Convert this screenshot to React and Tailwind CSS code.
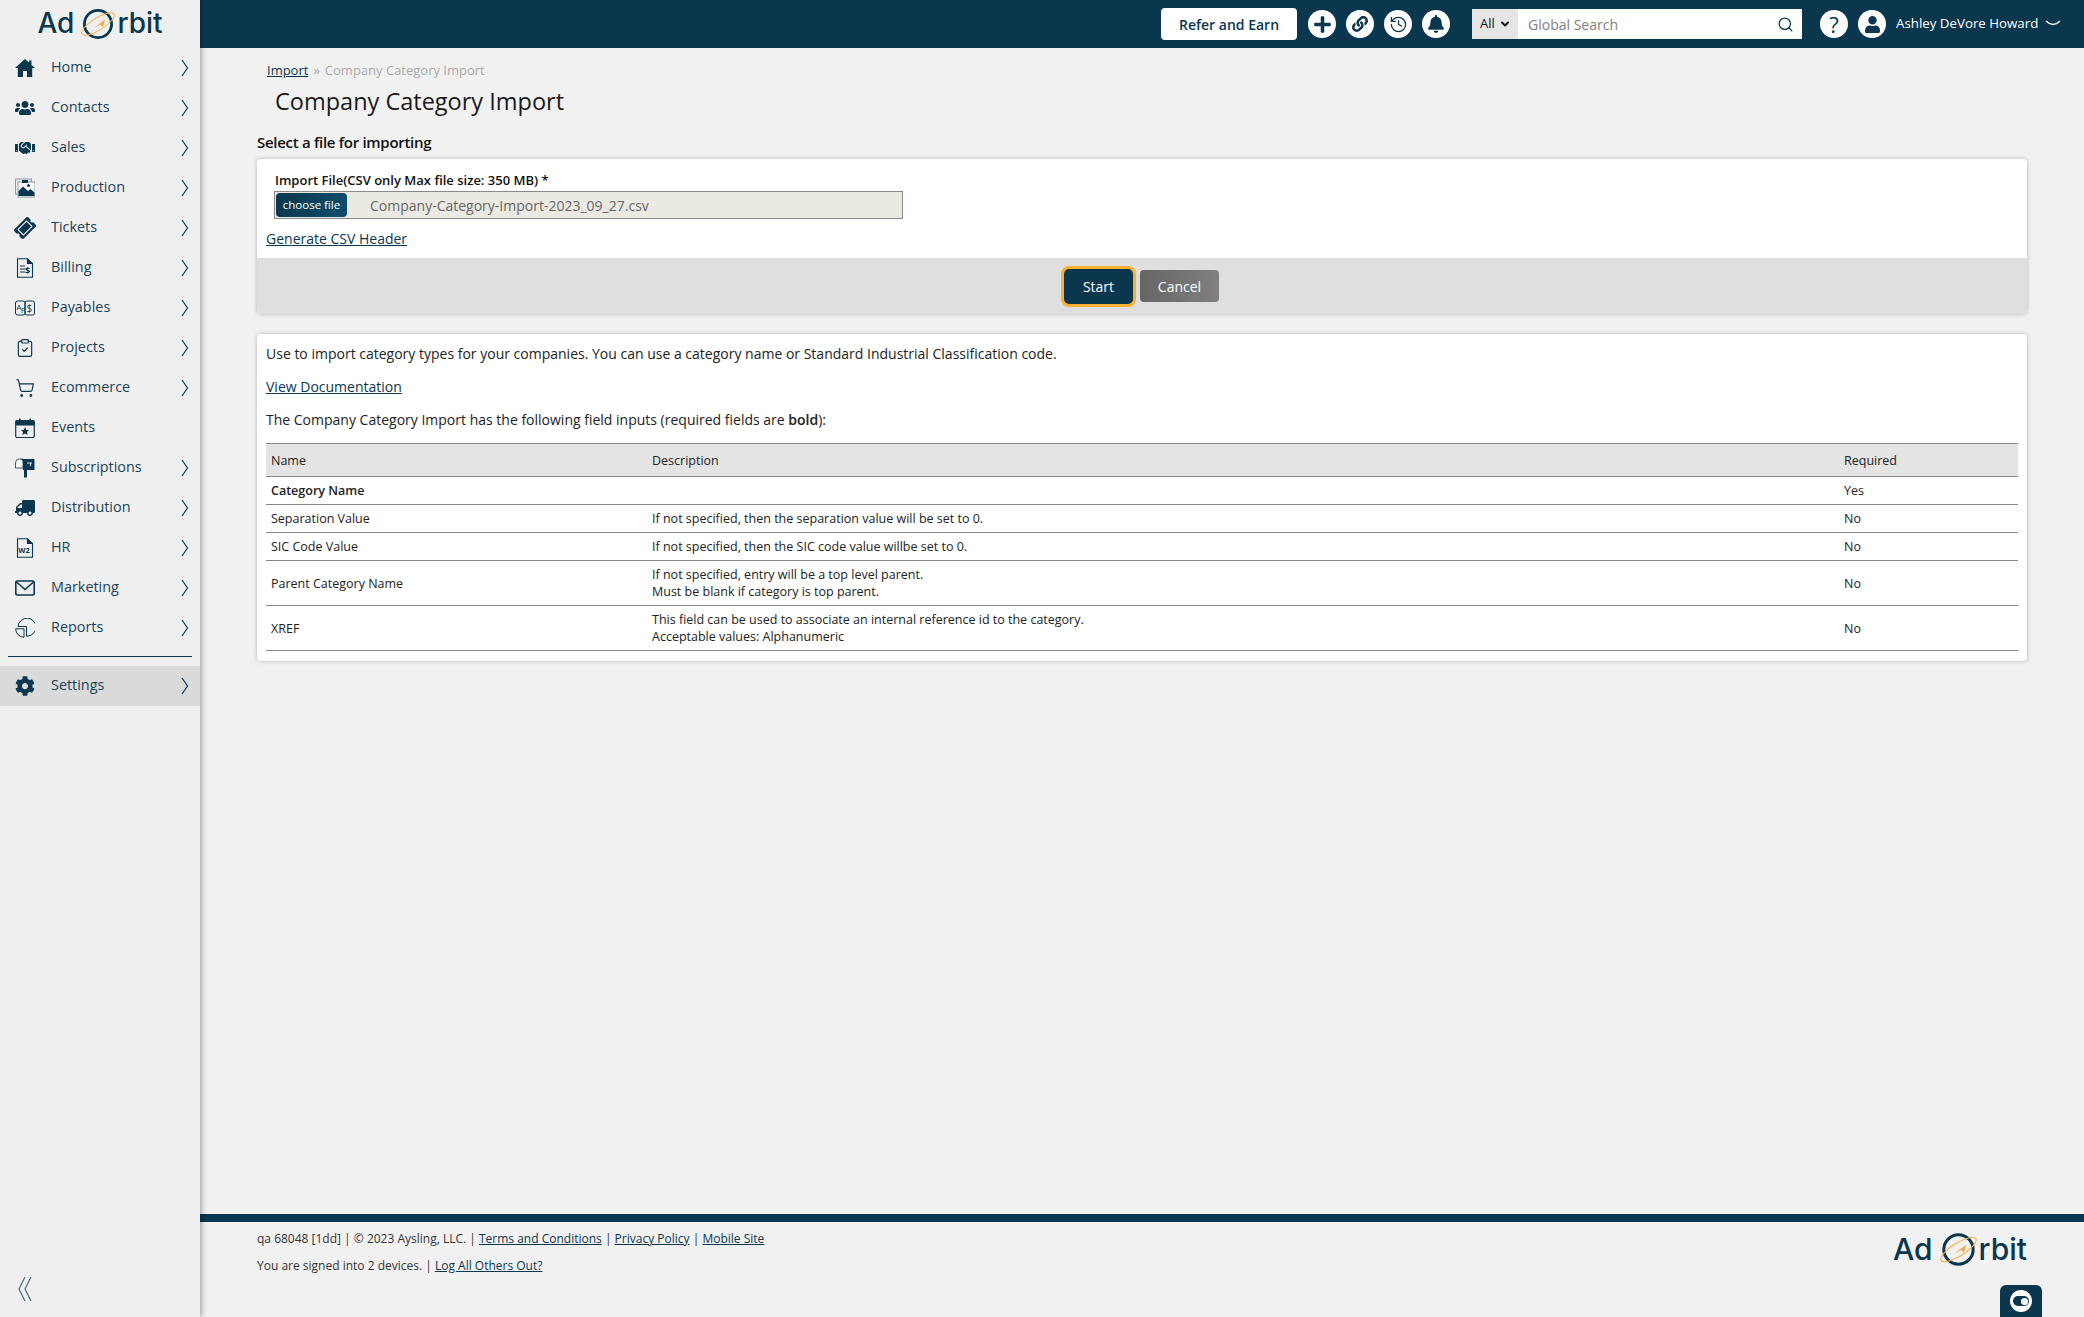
import { FaUsers, FaHandshake, FaTicketAlt, FaTruck, FaCog, FaBell, FaPlus, FaLink, FaUser } from 'react-icons/fa';
import { ShoppingCart, ClipboardCheck, Search, History, ChevronDown } from 'lucide-react';

const HomeIcon = () => (
  <svg viewBox="0 0 20 20" className="w-5 h-5" fill="#0a374d">
    <path d="M10 1 L14 4.6 V2.5 H16.5 V6.9 L20 10 H17.2 V19 H12 V13 H8 V19 H2.8 V10 H0 Z" />
  </svg>
);

const ProductionIcon = () => (
  <svg viewBox="0 0 20 20" className="w-5 h-5">
    <rect x="0.5" y="1" width="16" height="15" fill="none" stroke="#8a9aa5" strokeWidth="1" />
    <rect x="3" y="4" width="17" height="15" fill="#fff" stroke="#8a9aa5" strokeWidth="1" />
    <path d="M3.5 18 L3.5 13 L8 8.5 L13 13 L15.5 11 L19.5 14.5 L19.5 18 Z" fill="#0a374d" />
    <circle cx="13.5" cy="7.5" r="1.5" fill="#0a374d" />
    <rect x="7" y="2" width="6" height="3" fill="#0a374d" />
  </svg>
);

const BillingIcon = () => (
  <svg viewBox="0 0 20 20" className="w-5 h-5" fill="none" stroke="#0a374d" strokeWidth="1.1">
    <path d="M2.5 0.7 H12.5 L17.5 5.5 V19.3 H2.5 Z" />
    <path d="M12.5 0.7 V5.5 H17.5" fill="#0a374d" />
    <path d="M5 8 H10 M5 11 H10 M5 14 H10" />
    <text x="10" y="15.5" fontSize="9" fontWeight="700" fill="#0a374d" stroke="none" fontFamily="Open Sans">$</text>
  </svg>
);

const PayablesIcon = () => (
  <svg viewBox="0 0 20 20" className="w-5 h-5" fill="none" stroke="#0a374d" strokeWidth="1">
    <rect x="0.5" y="3" width="9.5" height="14" rx="2" />
    <rect x="10" y="3" width="9.5" height="14" rx="2" />
    <text x="1.5" y="11.5" fontSize="8" fill="#0a374d" stroke="none" fontFamily="Open Sans">A</text>
    <text x="6" y="15" fontSize="7" fill="#0a374d" stroke="none" fontFamily="Open Sans">P</text>
    <text x="11.5" y="14" fontSize="10" fill="#0a374d" stroke="none" fontFamily="Open Sans">$</text>
  </svg>
);

const EventsIcon = () => (
  <svg viewBox="0 0 20 20" className="w-5 h-5">
    <rect x="0.7" y="2.5" width="18.6" height="17" rx="1.5" fill="none" stroke="#0a374d" strokeWidth="1.2" />
    <rect x="0.7" y="2.5" width="18.6" height="5" fill="#0a374d" />
    <rect x="4" y="0.5" width="1.6" height="4" fill="#0a374d" />
    <rect x="14.4" y="0.5" width="1.6" height="4" fill="#0a374d" />
    <path d="M10 9 L11.2 12 L14.2 12.2 L11.9 14.1 L12.7 17 L10 15.4 L7.3 17 L8.1 14.1 L5.8 12.2 L8.8 12 Z" fill="#0a374d" />
  </svg>
);

const SubscriptionsIcon = () => (
  <svg viewBox="0 0 20 20" className="w-5 h-5">
    <path d="M0.5 10 V5 A4 4 0 0 1 4.5 1 H8 V10 Z" fill="#fff" stroke="#0a374d" strokeWidth="0.8" />
    <path d="M5 1 H19.5 V12 H12 V19.5 H9 V12 H8 V5 A4 4 0 0 0 5 1 Z" fill="#0a374d" />
    <path d="M12 5 H17 M15.5 5 V8" stroke="#efefef" strokeWidth="1" fill="none" />
  </svg>
);

const HrIcon = () => (
  <svg viewBox="0 0 20 20" className="w-5 h-5" fill="none" stroke="#0a374d" strokeWidth="1.1">
    <path d="M2.5 0.7 H12.5 L17.5 5.5 V19.3 H2.5 Z" />
    <path d="M12.5 0.7 V5.5 H17.5" fill="#0a374d" />
    <text x="3.3" y="14.5" fontSize="7.5" fontWeight="700" fill="#0a374d" stroke="none" fontFamily="Open Sans">W2</text>
  </svg>
);

const MarketingIcon = () => (
  <svg viewBox="0 0 20 20" className="w-5 h-5" fill="none" stroke="#0a374d" strokeWidth="1.6">
    <rect x="0.8" y="3" width="18.4" height="14" rx="1.5" />
    <path d="M1.5 4 L10 11.5 L18.5 4" />
  </svg>
);

const ReportsIcon = () => (
  <svg viewBox="0 0 20 20" className="w-5 h-5" fill="none" stroke="#0a374d" strokeWidth="1">
    <path d="M3 8.5 A9 9 0 1 1 11.5 18.2 V8.5 Z" />
    <path d="M0.7 10.8 H9 V19.3 A8.5 8.5 0 0 1 0.7 10.8 Z" />
  </svg>
);

const navItems = [
  { label: 'Home', icon: <HomeIcon /> },
  { label: 'Contacts', icon: <FaUsers className="w-5 h-5 text-[#0a374d]" /> },
  { label: 'Sales', icon: <FaHandshake className="w-5 h-5 text-[#0a374d]" /> },
  { label: 'Production', icon: <ProductionIcon /> },
  { label: 'Tickets', icon: <FaTicketAlt className="w-5 h-5 text-[#0a374d] -rotate-45" /> },
  { label: 'Billing', icon: <BillingIcon /> },
  { label: 'Payables', icon: <PayablesIcon /> },
  { label: 'Projects', icon: <ClipboardCheck className="w-5 h-5 text-[#0a374d]" strokeWidth={1.4} /> },
  { label: 'Ecommerce', icon: <ShoppingCart className="w-5 h-5 text-[#0a374d]" strokeWidth={1.4} /> },
  { label: 'Events', icon: <EventsIcon />, noArrow: true },
  { label: 'Subscriptions', icon: <SubscriptionsIcon /> },
  { label: 'Distribution', icon: <FaTruck className="w-5 h-5 text-[#0a374d] -scale-x-100" /> },
  { label: 'HR', icon: <HrIcon /> },
  { label: 'Marketing', icon: <MarketingIcon /> },
  { label: 'Reports', icon: <ReportsIcon /> },
];

const rows = [
  { name: 'Category Name', desc: [], req: 'Yes', bold: true, h: 'h-[28px]' },
  { name: 'Separation Value', desc: ['If not specified, then the separation value will be set to 0.'], req: 'No', h: 'h-[28px]' },
  { name: 'SIC Code Value', desc: ['If not specified, then the SIC code value willbe set to 0.'], req: 'No', h: 'h-[28px]' },
  { name: 'Parent Category Name', desc: ['If not specified, entry will be a top level parent.', 'Must be blank if category is top parent.'], req: 'No', h: 'h-[45px]' },
  { name: 'XREF', desc: ['This field can be used to associate an internal reference id to the category.', 'Acceptable values: Alphanumeric'], req: 'No', h: 'h-[45px]' },
];

function Arrow() {
  return (
    <svg viewBox="0 0 8 18" className="w-[8px] h-[18px]" fill="none" stroke="#0a374d" strokeWidth="1.2">
      <path d="M1 1 L6.5 9 L1 17" />
    </svg>
  );
}

function NavItem({ item, active }) {
  return (
    <div className={`flex items-center h-10 pl-[15px] pr-[11px] ${active ? 'bg-[#d9dbda]' : ''}`}>
      <div className="w-5 h-5 flex items-center justify-center shrink-0">{item.icon}</div>
      <span className="ml-[16px] pb-[2px] text-[14.4px] leading-none font-medium text-[#1c4358]">{item.label}</span>
      {!item.noArrow && <div className="ml-auto flex"><Arrow /></div>}
    </div>
  );
}

function LogoMark({ className }) {
  return (
    <svg viewBox="0 0 38 34" className={className} fill="none">
      <circle cx="19" cy="17" r="13.6" stroke="#0a374d" strokeWidth="2.8" />
      <ellipse cx="19" cy="17" rx="19" ry="6" transform="rotate(-32 19 17)" stroke="#f9b04a" strokeWidth="1" />
      <path d="M15 21 L26 12.5 L24 20 L21.5 17.5 Z" fill="#f9a43a" />
    </svg>
  );
}

function Logo({ large }) {
  return (
    <div className={`flex items-center text-[#0a374d] font-['Inter',sans-serif] font-medium leading-none ${large ? 'text-[30px]' : 'text-[28px]'}`}>
      <span>Ad</span>
      <LogoMark className={large ? 'w-[41px] h-[37px] ml-[5px] shrink-0 mt-[2px]' : 'w-[38px] h-[34px] ml-[5px] shrink-0 mt-[2px]'} />
      <span>rbit</span>
    </div>
  );
}

function HeaderCircle({ children }) {
  return (
    <div className="w-7 h-7 rounded-full bg-white flex items-center justify-center text-[#0a374d]">
      {children}
    </div>
  );
}

export default function App() {
  return (
    <div className="flex w-[2084px] h-[1317px] overflow-hidden bg-[#f1f1f1] font-['Open_Sans',sans-serif] text-[#1a1a1a]">
      <aside className="relative z-10 w-[200px] shrink-0 flex flex-col bg-[#efefef] shadow-[2px_0_5px_rgba(0,0,0,0.3)]">
        <div className="h-[48px] pb-[2px] flex items-center justify-center">
          <Logo />
        </div>
        {navItems.map((item) => (
          <NavItem key={item.label} item={item} />
        ))}
        <div className="mt-[8px] mb-[9px] mx-2 border-t border-[#0a374d]" />
        <NavItem item={{ label: 'Settings', icon: <FaCog className="w-5 h-5 text-[#0a374d]" /> }} active />
        <div className="mt-auto pl-[18px] pb-[15px]">
          <svg viewBox="0 0 14 26" className="w-[14px] h-[26px]" fill="none" stroke="#5b7383" strokeWidth="1.3">
            <path d="M7 1 L1 13 L7 25 M13 1 L7 13 L13 25" />
          </svg>
        </div>
      </aside>

      <div className="flex-1 flex flex-col min-w-0">
        <header className="h-[48px] bg-[#0a374d] flex items-center shrink-0 pl-[961px]">
          <button className="w-[136px] h-8 rounded bg-white text-[14px] font-semibold text-[#0a374d]">Refer and Earn</button>
          <div className="ml-[11px] flex gap-[10px]">
            <HeaderCircle><FaPlus className="w-[19px] h-[19px]" /></HeaderCircle>
            <HeaderCircle><FaLink className="w-[16px] h-[16px]" /></HeaderCircle>
            <HeaderCircle><History className="w-[19px] h-[19px]" strokeWidth={1.6} /></HeaderCircle>
            <HeaderCircle><FaBell className="w-[18px] h-[18px]" /></HeaderCircle>
          </div>
          <div className="ml-[22px] w-[330px] h-[30px] flex bg-white">
            <div className="w-[46px] bg-[#e5e5e5] flex items-center pl-2 text-[13px] text-[#111]">
              All
              <ChevronDown className="w-3 h-3 ml-[4px] text-[#111]" strokeWidth={4} />
            </div>
            <div className="flex-1 flex items-center pl-[10px] pr-[8px] text-[14px] text-[#808080]">
              Global Search
              <Search className="ml-auto w-[17px] h-[17px] text-[#0a374d]" strokeWidth={1.8} />
            </div>
          </div>
          <div className="ml-[18px] flex gap-[10px]">
            <div className="w-7 h-7 rounded-full bg-white flex items-center justify-center text-[#0a374d] text-[22px] leading-none">?</div>
            <HeaderCircle><FaUser className="w-[17px] h-[17px]" /></HeaderCircle>
          </div>
          <span className="ml-[10px] text-[13.3px] text-white whitespace-nowrap">Ashley DeVore Howard</span>
          <svg viewBox="0 0 16 8" className="w-4 h-2 ml-[7px]" fill="none" stroke="#fff" strokeWidth="1.3">
            <path d="M1 1 Q8 8 15 1" />
          </svg>
        </header>

        <main className="flex-1 pl-[57px] pr-[57px] min-h-0">
          <div className="pt-[14px] pl-[10px] text-[13px] leading-[17px] text-[#aaa]">
            <a className="underline text-[#0a374d]">Import</a>
            <span className="mx-[5px]">»</span>
            Company Category Import
          </div>
          <h1 className="mt-[6px] pl-[18px] text-[23.5px] leading-[32px] text-[#1a1a1a]">Company Category Import</h1>
          <h2 className="mt-[15px] text-[15px] leading-[20px] font-semibold tracking-[-0.02em] text-[#111]">Select a file for importing</h2>

          <section className="mt-[7px] bg-white rounded shadow-[0_0_4px_rgba(0,0,0,0.25)]">
            <div className="h-[99px] pt-[12px]">
              <div className="pl-[18px] text-[13px] leading-[18px] font-semibold text-[#111]">Import File(CSV only Max file size: 350 MB) *</div>
              <div className="ml-[17px] mt-[2px] w-[629px] h-[28px] flex items-center border border-[#8a8a8a] bg-[#ebeae2] pl-[1px]">
                <button className="w-[71px] h-6 rounded bg-gradient-to-r from-[#0a374d] to-[#0f4d6b] text-white text-[11.5px] font-normal">choose file</button>
                <span className="ml-[23px] text-[14px] text-[#666]">Company-Category-Import-2023_09_27.csv</span>
              </div>
              <a className="block ml-[9px] mt-[10px] text-[14px] leading-[20px] underline text-[#0a374d]">Generate CSV Header</a>
            </div>
            <div className="h-[56px] rounded-b bg-[#dfdfdf] flex items-center justify-center gap-[5px] pr-[3px]">
              <button className="w-[73px] h-[39px] rounded-[7px] bg-[#0a374d] border-[1px] border-white outline-[3px] outline-[#fbb034] -outline-offset-[2px] text-white text-[14px]">Start</button>
              <button className="w-[79px] h-[32px] rounded bg-gradient-to-r from-[#666] to-[#808080] text-white text-[14px]">Cancel</button>
            </div>
          </section>

          <section className="mt-[20px] h-[327px] bg-white rounded shadow-[0_0_4px_rgba(0,0,0,0.25)] px-[9px] pt-[10px]">
            <p className="text-[14px] leading-[20px] text-[#222]">Use to import category types for your companies. You can use a category name or Standard Industrial Classification code.</p>
            <a className="block mt-[13px] text-[14px] leading-[20px] underline text-[#0a374d]">View Documentation</a>
            <p className="mt-[13px] text-[14px] leading-[20px] text-[#222]">The Company Category Import has the following field inputs (required fields are <span className="font-semibold">bold</span>):</p>
            <table className="mt-[13px] w-full border-collapse table-fixed text-[12.5px] leading-[17px] text-[#222]">
              <thead>
                <tr className="h-[33px] bg-[#e4e4e4] border-y border-[#888] text-left">
                  <th className="w-[381px] pl-[5px] font-normal">Name</th>
                  <th className="w-[1192px] pl-[5px] font-normal">Description</th>
                  <th className="pl-[5px] font-normal">Required</th>
                </tr>
              </thead>
              <tbody>
                {rows.map((r) => (
                  <tr key={r.name} className={`${r.h} border-b border-[#888]`}>
                    <td className={`pl-[5px] ${r.bold ? 'font-semibold' : ''}`}>{r.name}</td>
                    <td className="pl-[5px]">
                      {r.desc.map((d) => (
                        <div key={d}>{d}</div>
                      ))}
                    </td>
                    <td className="pl-[5px]">{r.req}</td>
                  </tr>
                ))}
              </tbody>
            </table>
          </section>
        </main>

        <footer className="h-[103px] shrink-0 border-t-[8px] border-[#0a374d] pl-[57px] pr-[42px] flex justify-between text-[12px] text-[#333]">
          <div className="pt-[8px] leading-[17px]">
            <div>
              qa 68048 [1dd] | © 2023 Aysling, LLC. | <a className="underline text-[#0a374d]">Terms and Conditions</a> | <a className="underline text-[#0a374d]">Privacy Policy</a> | <a className="underline text-[#0a374d]">Mobile Site</a>
            </div>
            <div className="mt-[10px]">
              You are signed into 2 devices. | <a className="underline text-[#0a374d]">Log All Others Out?</a>
            </div>
          </div>
          <div className="flex flex-col items-end">
            <div className="mt-[7px] mr-[15px]"><Logo large /></div>
            <div className="mt-auto w-[42px] h-[32px] rounded-t-[6px] bg-[#0a374d] flex items-center justify-center">
              <div className="w-[22px] h-[22px] rounded-full bg-white flex items-center justify-center">
                <div className="w-[16px] h-[10px] rounded-full bg-[#0a374d] flex items-center justify-end pr-[1px]">
                  <div className="w-[7px] h-[7px] rounded-full bg-white" />
                </div>
              </div>
            </div>
          </div>
        </footer>
      </div>
    </div>
  );
}
